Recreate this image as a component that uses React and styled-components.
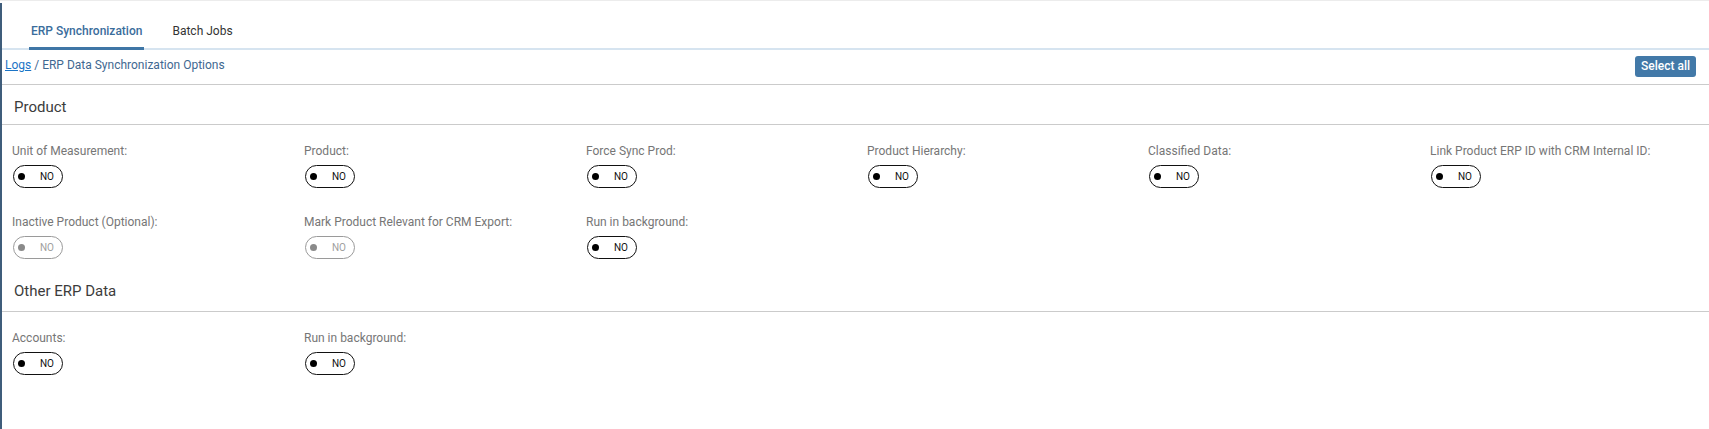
import React from "react";
import styled, { createGlobalStyle } from "styled-components";

const Global = createGlobalStyle`
  html, body { margin: 0; padding: 0; background: #fff; }
  body { font-family: Roboto, "Noto Sans", Arial, sans-serif; }
  * { box-sizing: border-box; }
`;

const Page = styled.div`
  width: 1709px;
  height: 429px;
  border-top: 1px solid #ececec;
  overflow: hidden;
  background: #fff;
`;

const Frame = styled.div`
  margin-top: 2px;
  height: 426px;
  border-left: 2px solid #3f5d7b;
`;

const TabBar = styled.div`
  display: flex;
  height: 47px;
  padding-left: 27px;
  border-bottom: 2px solid #d6e4f0;
`;

const Tab = styled.div`
  display: flex;
  align-items: center;
  padding: 11px 2px 0;
  margin-right: 26px;
  margin-bottom: -2px;
  font-size: 12px;
  font-weight: ${(p) => (p.$active ? 500 : 400)};
  color: ${(p) => (p.$active ? "#3a6d9c" : "#333")};
  border-bottom: 3px solid ${(p) => (p.$active ? "#3f76a6" : "transparent")};
`;

const CrumbBar = styled.div`
  display: flex;
  align-items: center;
  justify-content: space-between;
  height: 35px;
  padding: 0 13px 0 3px;
  border-bottom: 1px solid #cbcbcb;
`;

const Crumbs = styled.div`
  font-size: 12px;
  color: #3f6891;
  margin-top: -4px;
`;

const CrumbLink = styled.a`
  color: #1b74c6;
  text-decoration: underline;
  cursor: pointer;
`;

const Button = styled.button`
  border: none;
  background: #4279a8;
  color: #fff;
  font-family: Roboto, Arial, sans-serif;
  font-size: 12px;
  font-weight: 500;
  height: 21px;
  padding: 0 6px;
  border-radius: 3px;
  margin-top: -2px;
`;

const SectionHeader = styled.div`
  font-size: 15px;
  color: #3c3c3c;
  padding: ${(p) => p.$pt}px 0 ${(p) => p.$pb}px 12px;
  line-height: 18px;
  border-bottom: 1px solid #cbcbcb;
`;

const Grid = styled.div`
  display: grid;
  grid-template-columns: 292px 282px 281px 281px 282px 1fr;
  row-gap: 26px;
  padding: 18px 0 0 10px;
`;

const Field = styled.div`
  display: flex;
  flex-direction: column;
  align-items: flex-start;
  gap: 6px;
`;

const Label = styled.div`
  font-size: 12px;
  line-height: 16px;
  color: #767676;
`;

const Toggle = styled.div`
  width: 50px;
  height: 23px;
  margin-left: 1px;
  border: 1.5px solid ${(p) => (p.$disabled ? "#9a9a9a" : "#111")};
  border-radius: 12px;
  display: flex;
  align-items: center;
  padding-left: 4px;
`;

const Dot = styled.span`
  width: 7px;
  height: 7px;
  border-radius: 50%;
  background: ${(p) => (p.$disabled ? "#8a8a8a" : "#000")};
`;

const ToggleText = styled.span`
  font-size: 10px;
  color: ${(p) => (p.$disabled ? "#a0a0a0" : "#111")};
  margin-left: 15px;
  letter-spacing: -0.2px;
`;

const Switch = ({ disabled }) => (
  <Toggle $disabled={disabled}>
    <Dot $disabled={disabled} />
    <ToggleText $disabled={disabled}>NO</ToggleText>
  </Toggle>
);

const productFields = [
  { label: "Unit of Measurement:" },
  { label: "Product:" },
  { label: "Force Sync Prod:" },
  { label: "Product Hierarchy:" },
  { label: "Classified Data:" },
  { label: "Link Product ERP ID with CRM Internal ID:" },
  { label: "Inactive Product (Optional):", disabled: true },
  { label: "Mark Product Relevant for CRM Export:", disabled: true },
  { label: "Run in background:" },
];

const otherFields = [{ label: "Accounts:" }, { label: "Run in background:" }];

const Fields = ({ items }) => (
  <Grid>
    {items.map((f, i) => (
      <Field key={i}>
        <Label>{f.label}</Label>
        <Switch disabled={f.disabled} />
      </Field>
    ))}
  </Grid>
);

const OtherBlock = styled.div`
  margin-top: 23px;
`;

export default function App() {
  return (
    <Page>
      <Global />
      <Frame>
        <TabBar>
          <Tab $active>ERP Synchronization</Tab>
          <Tab>Batch Jobs</Tab>
        </TabBar>
        <CrumbBar>
          <Crumbs>
            <CrumbLink>Logs</CrumbLink> / ERP Data Synchronization Options
          </Crumbs>
          <Button>Select all</Button>
        </CrumbBar>
        <SectionHeader $pt={13} $pb={8}>Product</SectionHeader>
        <Fields items={productFields} />
        <OtherBlock>
          <SectionHeader $pt={0} $pb={11}>Other ERP Data</SectionHeader>
          <Fields items={otherFields} />
        </OtherBlock>
      </Frame>
    </Page>
  );
}
